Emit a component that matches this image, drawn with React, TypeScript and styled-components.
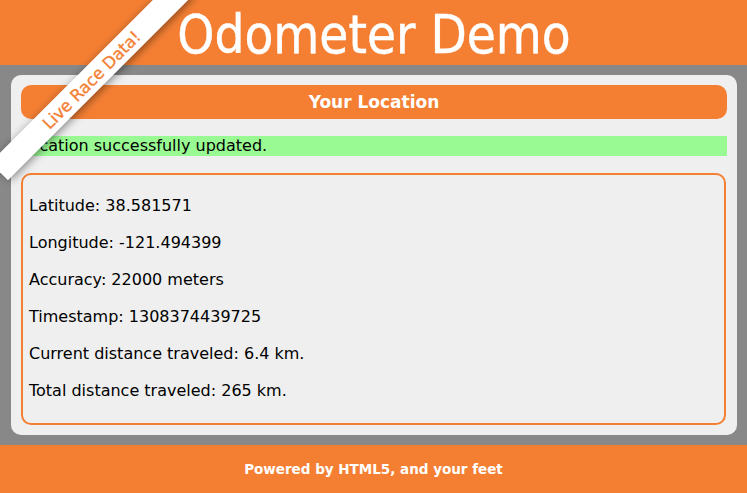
import React from "react";
import styled, { createGlobalStyle } from "styled-components";

const GlobalStyle = createGlobalStyle`
  html, body {
    margin: 0;
    padding: 0;
    background: #888888;
    font-family: "DejaVu Sans", "Liberation Sans", sans-serif;
    color: #000;
  }
`;

const Page = styled.div`
  position: relative;
  width: 747px;
  height: 493px;
  overflow: hidden;
  display: flex;
  flex-direction: column;
  background: #888888;
`;

const Header = styled.header`
  height: 65px;
  background: #f47f33;
  display: flex;
  align-items: center;
  justify-content: center;
`;

const Title = styled.h1`
  margin: 0;
  font-family: "DejaVu Sans", sans-serif;
  font-stretch: condensed;
  font-weight: normal;
  font-size: 52.5px;
  line-height: 65px;
  color: #fff;
  padding-top: 3px;
  padding-left: 1px;
  -webkit-text-stroke: 0.4px #fff;
`;

const Main = styled.main`
  flex: 1;
  padding: 10px 10px 10px 11px;
  display: flex;
`;

const Panel = styled.section`
  flex: 1;
  background: #efefef;
  border-radius: 10px;
  padding: 10px;
  display: flex;
  flex-direction: column;
`;

const SectionTitle = styled.h2`
  margin: 0;
  height: 34px;
  background: #f47f33;
  border-radius: 10px;
  color: #fff;
  font-size: 17px;
  font-weight: bold;
  text-align: center;
  line-height: 35px;
`;

const Status = styled.div`
  margin-top: 17px;
  height: 20px;
  line-height: 20px;
  background: #99fa93;
  font-size: 16px;
  padding-left: 0;
`;

const DataBox = styled.div`
  margin-top: 17px;
  border: 2px solid #f47f33;
  border-radius: 10px;
  padding: 4px 6px 6px;
  margin-right: 1px;
`;

const Line = styled.p`
  margin: 16px 0;
  font-size: 16px;
  line-height: 21px;
`;

const Footer = styled.footer`
  height: 47px;
  background: #f47f33;
  display: flex;
  align-items: center;
  justify-content: center;
  color: #fff;
  font-weight: bold;
  font-size: 13.5px;
  padding-bottom: 1px;
`;

const Ribbon = styled.div`
  position: absolute;
  left: -39px;
  top: 67px;
  width: 260px;
  height: 25px;
  box-sizing: border-box;
  padding-top: 2px;
  line-height: 23px;
  background: #fff;
  color: #f47f33;
  font-size: 16.5px;
  text-align: center;
  transform: rotate(-45deg);
  box-shadow: 2px 2px 8px rgba(0, 0, 0, 0.45);
  -webkit-text-stroke: 0.35px #f47f33;
`;

const rows = [
  "Latitude: 38.581571",
  "Longitude: -121.494399",
  "Accuracy: 22000 meters",
  "Timestamp: 1308374439725",
  "Current distance traveled: 6.4 km.",
  "Total distance traveled: 265 km.",
];

export default function App() {
  return (
    <>
      <GlobalStyle />
      <Page>
        <Header>
          <Title>Odometer Demo</Title>
        </Header>
        <Main>
          <Panel>
            <SectionTitle>Your Location</SectionTitle>
            <Status>Location successfully updated.</Status>
            <DataBox>
              {rows.map((r) => (
                <Line key={r}>{r}</Line>
              ))}
            </DataBox>
          </Panel>
        </Main>
        <Footer>Powered by HTML5, and your feet</Footer>
        <Ribbon>Live Race Data!</Ribbon>
      </Page>
    </>
  );
}
